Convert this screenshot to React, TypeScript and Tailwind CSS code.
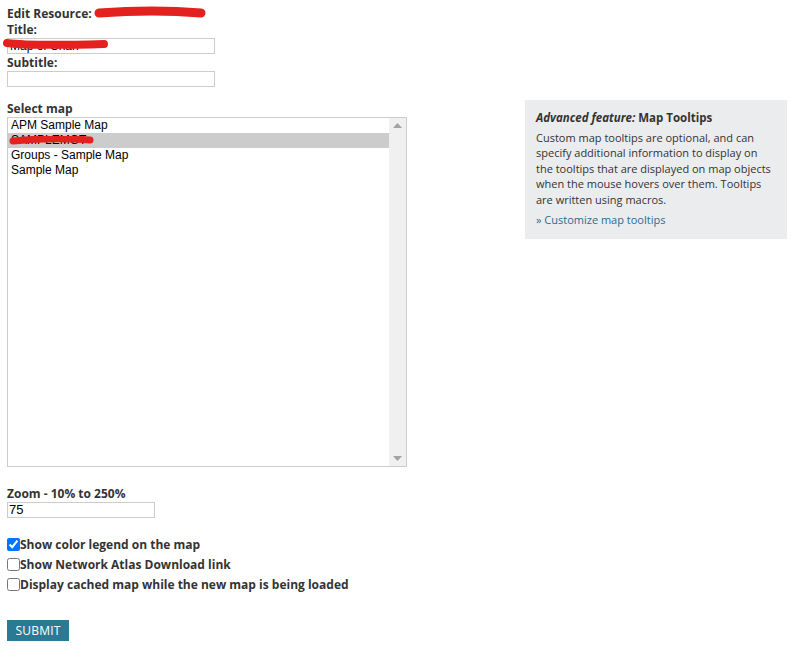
import React from "react";

const Scribble = ({ w, h, d, sw = 8, className }: { w: number; h: number; d: string; sw?: number; className: string }) => (
  <svg width={w} height={h} viewBox={`0 0 ${w} ${h}`} className={"absolute pointer-events-none " + className}>
    <path d={d} stroke="#e3211f" strokeWidth={sw} strokeLinecap="round" fill="none" />
  </svg>
);

export default function App() {
  const font = { fontFamily: '"Open Sans", sans-serif' };
  const arial = { fontFamily: '"Liberation Sans", Arial, sans-serif' };
  return (
    <div className="relative w-[805px] h-[658px] bg-white text-[#333]" style={font}>
      <div className="flex items-start">
        <div className="pl-[7px] w-[525px] shrink-0">
          <div className="relative pt-[5px] text-[12px] font-bold leading-[17px]">
            Edit Resource:
            <Scribble className="left-[86px] top-[3px]" w={116} h={18} d="M6 10 C 35 8, 70 7, 108 10" sw={9} />
          </div>
          <div className="text-[12px] font-bold leading-[16px]">Title:</div>
          <div className="relative">
            <div className="w-[208px] h-[16px] border border-[#ccc] text-[12px] leading-[14px] px-[2px] text-black" style={arial}>
              Map of Chan
            </div>
            <Scribble className="-left-[7px] -top-[2px]" w={112} h={16} d="M7 7 C 30 10, 70 9, 104 8" sw={8} />
          </div>
          <div className="text-[12px] font-bold leading-[17px]">Subtitle:</div>
          <div className="w-[208px] h-[16px] border border-[#ccc]" />
          <div className="text-[12px] font-bold leading-[17px] mt-[13px]">Select map</div>
          <div className="flex w-[400px] h-[350px] border border-[#ccc] text-[12px]" style={arial}>
            <div className="flex-1 flex flex-col text-black">
              <div className="h-[15px] leading-[15px] pl-[3px]">APM Sample Map</div>
              <div className="relative h-[15px] leading-[15px] pl-[3px] bg-[#cccccc]">
                <span>SAMPLEMGT</span>
                <Scribble className="left-0 top-[3px]" w={90} h={12} d="M5 5 C 25 3, 55 2, 82 4" sw={7} />
              </div>
              <div className="h-[15px] leading-[15px] pl-[3px]">Groups - Sample Map</div>
              <div className="h-[15px] leading-[15px] pl-[3px]">Sample Map</div>
            </div>
            <div className="w-[17px] bg-[#f0f0f0] flex flex-col justify-between items-center py-[5px]">
              <svg width="9" height="5" viewBox="0 0 9 5"><path d="M4.5 0 L9 5 L0 5 Z" fill="#a3a3a3" /></svg>
              <svg width="9" height="5" viewBox="0 0 9 5"><path d="M0 0 L9 0 L4.5 5 Z" fill="#a3a3a3" /></svg>
            </div>
          </div>
          <div className="text-[12px] font-bold leading-[17px] mt-[18px]">Zoom - 10% to 250%</div>
          <div className="w-[148px] h-[16px] border border-[#ccc] text-[13px] leading-[14px] pl-[1px] text-black" style={arial}>
            75
          </div>
          <div className="mt-[20px] flex flex-col gap-[7px]">
            {[
              ["Show color legend on the map", true],
              ["Show Network Atlas Download link", false],
              ["Display cached map while the new map is being loaded", false],
            ].map(([t, c]) => (
              <label key={t as string} className="flex items-center h-[13px] text-[12px] font-bold">
                <input type="checkbox" defaultChecked={c as boolean} className="m-0 w-[13px] h-[13px]" />
                <span className="leading-[13px]">{t as string}</span>
              </label>
            ))}
          </div>
          <button className="mt-[29px] h-[21px] w-[62px] bg-[#2a7a94] text-white text-[12px] leading-[21px] tracking-[0.2px]">
            SUBMIT
          </button>
        </div>
        <div className="mt-[100px] w-[262px] bg-[#ebecee] px-[11px] pt-[10px] pb-[11px] text-[11px] leading-[15.5px] text-[#333]">
          <div className="font-bold text-[11.5px] mb-[4px]">
            <i>Advanced feature:</i> Map Tooltips
          </div>
          <p>
            Custom map tooltips are optional, and can specify additional information to display on the tooltips that are
            displayed on map objects when the mouse hovers over them. Tooltips are written using macros.
          </p>
          <div className="mt-[5px] text-[#1f6f8e]">» Customize map tooltips</div>
        </div>
      </div>
    </div>
  );
}
